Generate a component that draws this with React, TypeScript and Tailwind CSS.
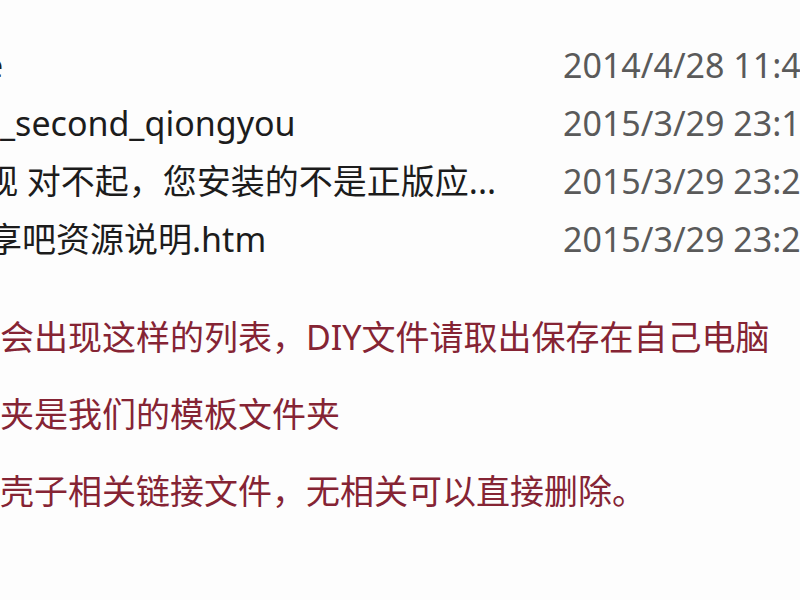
const files = [
  { name: "e", shift: "-ml-[16px]", date: "2014/4/28 11:47" },
  { name: "_second_qiongyou", shift: "ml-0", date: "2015/3/29 23:18" },
  { name: "观 对不起，您安装的不是正版应...", shift: "-ml-[16px]", date: "2015/3/29 23:20" },
  { name: "享吧资源说明.htm", shift: "-ml-[12px]", date: "2015/3/29 23:21" },
];

const notes = [
  "会出现这样的列表，DIY文件请取出保存在自己电脑",
  "夹是我们的模板文件夹",
  "壳子相关链接文件，无相关可以直接删除。",
];

export default function App() {
  return (
    <div
      className="w-[800px] h-[600px] overflow-hidden bg-[#fdfdfd]"
      style={{ fontFamily: '"Noto Sans", "Noto Sans CJK SC", sans-serif' }}
    >
      <div className="pt-[36px] flex flex-col">
        {files.map((f) => (
          <div key={f.date} className="flex items-center h-[58px] text-[34px]">
            <div className="w-[563px] shrink-0 overflow-hidden whitespace-nowrap">
              <span className={`inline-block ${f.shift} text-[#1c1c1c]`}>{f.name}</span>
            </div>
            <div className="whitespace-nowrap text-[#5a5a5a]">{f.date}</div>
          </div>
        ))}
      </div>
      <div className="mt-[31px] flex flex-col">
        {notes.map((n) => (
          <div
            key={n}
            className="h-[77px] flex items-center whitespace-nowrap text-[34px] text-[#852434]"
          >
            {n}
          </div>
        ))}
      </div>
    </div>
  );
}
